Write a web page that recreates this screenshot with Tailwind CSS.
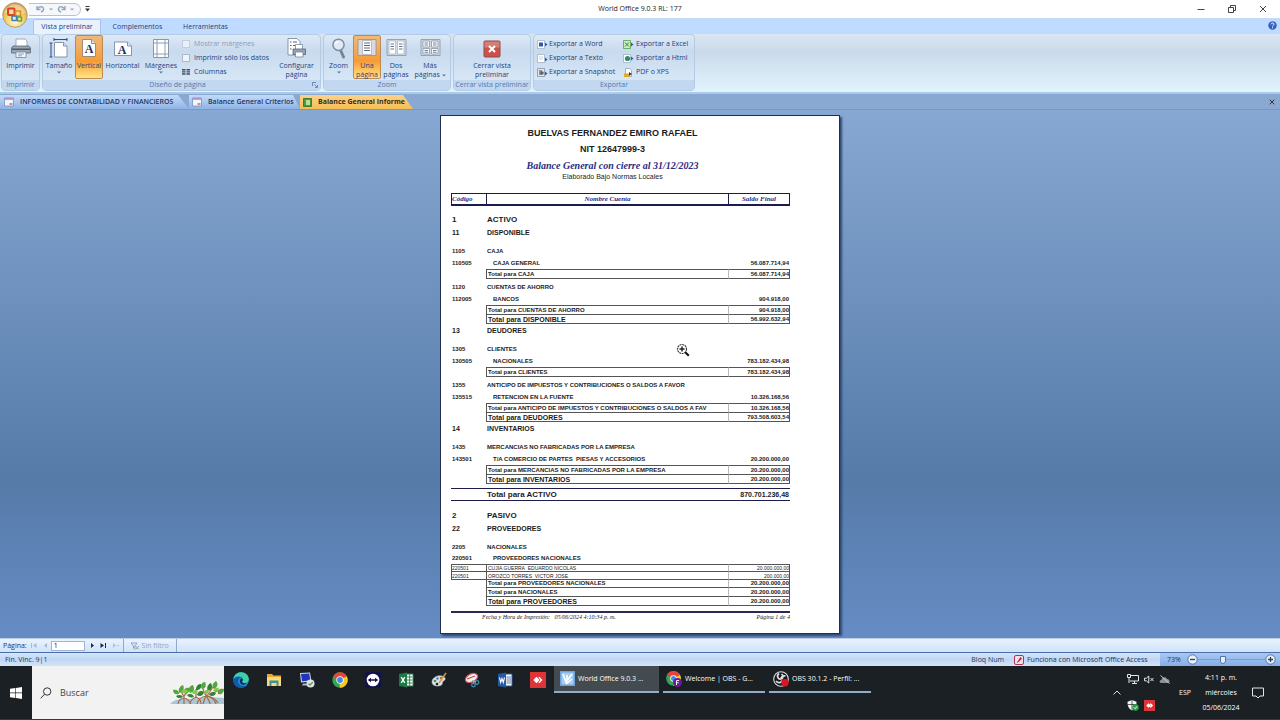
<!DOCTYPE html>
<html lang="es">
<head>
<meta charset="utf-8">
<meta name="viewport" content="width=device-width, initial-scale=1">
<title>World Office 9.0.3 RL: 177</title>
<script src="https://cdn.jsdelivr.net/npm/@tailwindcss/browser@4"></script>
</head>
<body class="flex h-screen flex-col overflow-hidden bg-white font-['Open_Sans','Noto_Sans',sans-serif] text-[7px] leading-[10px] text-[#1f3f7d]">

    <!-- Title bar -->
    <header class="relative flex h-[18px] shrink-0 items-center bg-white text-[#222]">
        <div class="ml-[29px] flex h-[13px] w-[52px] items-center justify-center gap-1 rounded-r-full border border-l-0 border-[#b9c3d0] bg-[#f5f7fa] text-[#98a6bb]">
            <button type="button" aria-label="Deshacer">
                <svg class="h-[8px] w-[9px]" viewBox="0 0 9 8" fill="none" stroke="currentColor" stroke-width="1.4"><path d="M1 1v3.5h3.5M1.300 4C3 1 7 1 7.500 3.500c.3 1.800-1 3-2.500 3.500"/></svg>
            </button>
            <svg class="h-[3px] w-[4px]" viewBox="0 0 4 3" fill="currentColor"><path d="M0 .5h4l-2 2z"/></svg>
            <button type="button" aria-label="Rehacer">
                <svg class="h-[8px] w-[9px]" viewBox="0 0 9 8" fill="none" stroke="currentColor" stroke-width="1.400"><path d="M8 1v3.500H4.500M7.700 4C6 1 2 1 1.500 3.500 1.200 5.300 2.500 6.500 4 7"/></svg>
            </button>
            <svg class="h-[3px] w-[4px]" viewBox="0 0 4 3" fill="currentColor"><path d="M0 .5h4l-2 2z"/></svg>
        </div>
        <button type="button" class="ml-1" aria-label="Personalizar">
            <svg class="h-[6px] w-[5px]" viewBox="0 0 5 6" fill="#333"><path d="M.5 0h4v1h-4zM0 2.500h5L2.500 5.500z"/></svg>
        </button>
        <h1 class="absolute left-1/2 -translate-x-1/2 whitespace-nowrap">World Office 9.0.3 RL: 177</h1>
        <div class="ml-auto flex items-center gap-[23px] pr-[13px]">
            <button type="button" aria-label="Minimizar"><svg class="h-[8px] w-[8px]" viewBox="0 0 8 8" stroke="#444" fill="none"><path d="M.5 4.500h7"/></svg></button>
            <button type="button" aria-label="Restaurar"><svg class="h-[8px] w-[8px]" viewBox="0 0 8 8" stroke="#444" fill="none"><path d="M.5 2.500h5v5h-5zM2.500 2V.5h5v5H6"/></svg></button>
            <button type="button" aria-label="Cerrar"><svg class="h-[8px] w-[8px]" viewBox="0 0 8 8" stroke="#444" fill="none"><path d="M1 1l6 6M7 1L1 7"/></svg></button>
        </div>

        <!-- Office button hangs over the ribbon tabs -->
        <button type="button" class="absolute top-[2px] left-[2px] z-10" aria-label="Botón de Office">
            <svg class="size-[26px]" viewBox="0 0 26 26">
                <defs>
                    <radialGradient id="orb" cx=".5" cy=".75" r=".75"><stop offset="0" stop-color="#fffbe0"/><stop offset=".5" stop-color="#f3ce62"/><stop offset="1" stop-color="#c99a4a"/></radialGradient>
                </defs>
                <circle cx="13" cy="13" r="12.300" fill="url(#orb)" stroke="#a98f66" stroke-width=".8"/>
                <path d="M2.500 11a10.700 10.700 0 0 1 21 0c-6 2-15 2-21 0z" fill="#fff" opacity=".35"/>
                <rect x="6" y="6.500" width="6.500" height="6.500" rx="1" fill="none" stroke="#d7442a" stroke-width="2"/>
                <rect x="13.500" y="9" width="5" height="5" rx=".6" fill="none" stroke="#e88a22" stroke-width="1.700"/>
                <rect x="10" y="14" width="4.500" height="4.500" rx=".6" fill="none" stroke="#3b78c8" stroke-width="1.500"/>
                <rect x="15.500" y="15" width="4" height="4" rx=".6" fill="none" stroke="#5aa63b" stroke-width="1.500"/>
            </svg>
        </button>
    </header>

    <!-- Ribbon tabs -->
    <nav class="flex h-4 shrink-0 items-end bg-[#bfdbff] pl-[33px]">
        <a href="#" class="flex h-[15px] w-[68px] items-center justify-center rounded-t-[2px] border border-b-0 border-[#a6c3ea] bg-[#e9f2fc]">Vista preliminar</a>
        <a href="#" class="flex h-[15px] w-[73px] items-center justify-center">Complementos</a>
        <a href="#" class="flex h-[15px] w-[63px] items-center justify-center">Herramientas</a>
        <button type="button" class="mr-[3px] mb-1 ml-auto" aria-label="Ayuda">
            <svg class="size-[9px]" viewBox="0 0 9 9"><circle cx="4.500" cy="4.500" r="4.200" fill="#2f62c0"/><path d="M3 3.300C3.200 1.500 6 1.600 6 3.200 6 4.300 4.500 4.300 4.500 5.500M4.500 6.300v1" stroke="#fff" fill="none"/></svg>
        </button>
    </nav>

    <!-- Ribbon -->
    <section class="flex h-[60px] shrink-0 gap-[2px] border-b-2 border-[#a9cbe6] bg-linear-to-b from-[#dbe6f3] via-[#cbdaeb] via-30% to-[#e0f4fc] px-px pb-px">
        <div class="flex w-[39px] flex-col rounded-sm border border-[#b3cbe5] bg-linear-to-b from-[#dde9f6] via-[#c8daee] via-30% to-[#dcebf8]">
            <button type="button" class="flex flex-1 flex-col items-center pt-[3px]">
                <svg class="h-[21px] w-[22px] shrink-0" viewBox="0 0 22 21"><path d="M6 1h9l2 2v7H6z" fill="#fff" stroke="#8c9bb0" stroke-width=".8"/><path d="M3 8h16l1.500 2v5h-19v-5z" fill="#9aa6b4" stroke="#5c6878" stroke-width=".8"/><path d="M2 10.500h18v1.500H2z" fill="#4e5865"/><path d="M6 14h10v5.500H6z" fill="#f5f8fc" stroke="#75849a" stroke-width=".8"/><path d="M8 16h6M8 17.800h4" stroke="#5d8ac0" stroke-width=".8"/></svg>
                <span class="pt-[2px]">Imprimir</span>
            </button>
            <p class="bg-[#c1d8f0] text-center text-[#5378ad]">Imprimir</p>
        </div>

        <div class="flex w-[279px] flex-col rounded-sm border border-[#b3cbe5] bg-linear-to-b from-[#dde9f6] via-[#c8daee] via-30% to-[#dcebf8]">
            <div class="flex flex-1">
                <button type="button" class="flex w-8 flex-col items-center pt-[3px]">
                    <svg class="h-[21px] w-[20px] shrink-0" viewBox="0 0 20 21"><path d="M5.500 4.500h9l3.500 3.500v11H5.500z" fill="#fff" stroke="#7b8ca6" stroke-width=".9"/><path d="M14.500 4.500V8H18" fill="#dbe5f2" stroke="#7b8ca6" stroke-width=".9"/><path d="M5 1.500h13M5 0v3M18 0v3M2 5v14M.5 5h3M.5 19h3" stroke="#2d4c86" fill="none"/></svg>
                    <span class="pt-[2px]">Tamaño</span>
                    <svg class="h-[3px] w-[4px]" viewBox="0 0 4 3" fill="#5776a8"><path d="M0 .5h4l-2 2z"/></svg>
                </button>
                <button type="button" class="flex h-[44px] w-7 flex-col items-center justify-start rounded-[2px] border border-[#b98b52] bg-linear-to-b from-[#f0b878] via-[#f59b35] via-60% to-[#ffe680] pt-[2px]">
                    <svg class="h-[21px] w-[16px] shrink-0" viewBox="0 0 16 21"><path d="M1.500 1.500h9l4 4v13h-13z" fill="#fff" stroke="#96846c" stroke-width=".9"/><path d="M10.500 1.500v4h4" fill="#e6e6e6" stroke="#96846c" stroke-width=".9"/><text x="8" y="15" text-anchor="middle" font-family="Liberation Serif" font-weight="bold" font-size="12" fill="#1c2f66">A</text></svg>
                    <span class="pt-[2px]">Vertical</span>
                </button>
                <button type="button" class="flex w-[39px] flex-col items-center pt-[3px]">
                    <svg class="h-[21px] w-[20px] shrink-0" viewBox="0 0 20 21"><path d="M1.500 4h13l4 4v9.500h-17z" fill="#fff" stroke="#7b8ca6" stroke-width=".9"/><path d="M14.500 4v4h4" fill="#dbe5f2" stroke="#7b8ca6" stroke-width=".9"/><text x="9" y="15.500" text-anchor="middle" font-family="Liberation Serif" font-weight="bold" font-size="12" fill="#1c2f66">A</text></svg>
                    <span class="pt-[2px]">Horizontal</span>
                </button>
                <button type="button" class="flex w-[38px] flex-col items-center pt-[3px]">
                    <svg class="h-[21px] w-[18px] shrink-0" viewBox="0 0 18 21"><path d="M1.500 1.500h15v18h-15z" fill="#fff" stroke="#7b8ca6" stroke-width=".9"/><path d="M5 1.500v18M13 1.500v18M1.500 5h15M1.500 16h15" stroke="#8593a8" stroke-width=".9"/></svg>
                    <span class="pt-[2px]">Márgenes</span>
                    <svg class="h-[3px] w-[4px]" viewBox="0 0 4 3" fill="#5776a8"><path d="M0 .5h4l-2 2z"/></svg>
                </button>
                <div class="flex flex-1 flex-col gap-1 pt-[4px] pl-[2px]">
                    <label class="flex items-center gap-[4px] text-[#8d9db5]"><input type="checkbox" disabled class="size-[8px] appearance-none border border-[#c3cfdd] bg-[#eaf0f7]">Mostrar márgenes</label>
                    <label class="flex items-center gap-[4px]"><input type="checkbox" class="size-[8px] appearance-none border border-[#aab8ca] bg-[#f1f5fa]">Imprimir sólo los datos</label>
                    <button type="button" class="flex items-center gap-[4px]"><svg class="h-[8px] w-[8px]" viewBox="0 0 8 8" fill="#3f4d63"><path d="M0 1h3.500v1.500H0zM4.500 1H8v1.500H4.500zM0 3.200h3.500v1.300H0zM4.500 3.200H8v1.300H4.500zM0 5.300h3.500v1.500H0zM4.500 5.300H8v1.500H4.500z"/></svg>Columnas</button>
                </div>
                <button type="button" class="flex w-[47px] flex-col items-center pt-[3px] leading-[9px]">
                    <svg class="h-[21px] w-[21px] shrink-0" viewBox="0 0 21 21"><path d="M2 .5h9l3 3V17H2z" fill="#fff" stroke="#7b8ca6" stroke-width=".9"/><path d="M4 4h1.500M4 7.500h1.500M4 11h1.500M7 4h4M7 7.500h4" stroke="#4f6079" stroke-width="1.200"/><path d="M9.500 6.500h7v5h-7z" fill="#fff" stroke="#7b8ca6" stroke-width=".8"/><path d="M7 11h12.500v5.500H7z" fill="#97a3b2" stroke="#566273" stroke-width=".8"/><path d="M9.500 14h7.500v5H9.500z" fill="#fff" stroke="#75849a" stroke-width=".8"/></svg>
                    <span class="pt-[2px]">Configurar<br>página</span>
                </button>
            </div>
            <div class="flex items-center bg-[#c1d8f0] text-[#5378ad]">
                <p class="flex-1 text-center">Diseño de página</p>
                <button type="button" class="mr-[2px]" aria-label="Opciones de página"><svg class="size-[6px]" viewBox="0 0 6 6" stroke="#5378ad" fill="none" stroke-width=".8"><path d="M.5 4V.5H4M2.500 2.500L5 5M5.500 3v2.500H3"/></svg></button>
            </div>
        </div>

        <div class="flex w-[128px] flex-col rounded-sm border border-[#b3cbe5] bg-linear-to-b from-[#dde9f6] via-[#c8daee] via-30% to-[#dcebf8]">
            <div class="flex flex-1">
                <button type="button" class="flex w-[29px] flex-col items-center pt-[3px]">
                    <svg class="h-[21px] w-[16px] shrink-0" viewBox="0 0 16 21"><path d="M9.500 12l3 7" stroke="#77869b" stroke-width="3" stroke-linecap="round"/><circle cx="7.500" cy="6.800" r="5.600" fill="#dfeaf6" stroke="#7f8da2" stroke-width="1.500"/><path d="M4.500 6a3 3 0 0 1 3-2.500" stroke="#fff" fill="none" stroke-width="1.200"/></svg>
                    <span class="pt-[2px]">Zoom</span>
                    <svg class="h-[3px] w-[4px]" viewBox="0 0 4 3" fill="#5776a8"><path d="M0 .5h4l-2 2z"/></svg>
                </button>
                <button type="button" class="flex h-[44px] w-7 flex-col items-center justify-start rounded-[2px] border border-[#b98b52] bg-linear-to-b from-[#f0b878] via-[#f59b35] via-60% to-[#ffe680] pt-[2px] leading-[9px]">
                    <svg class="h-[21px] w-[20px] shrink-0" viewBox="0 0 20 21"><path d="M1 1.500h18v16H1z" fill="#d9dbe0" stroke="#8f8f96" stroke-width=".8"/><path d="M5.500 2.500h9v14h-9z" fill="#fff" stroke="#9a9a9a" stroke-width=".6"/><path d="M7 5h6M7 7.500h6M7 10h6M7 12.500h6" stroke="#5e6a7c"/></svg>
                    <span class="pt-[2px]">Una<br>página</span>
                </button>
                <button type="button" class="flex w-[30px] flex-col items-center pt-[3px] leading-[9px]">
                    <svg class="h-[21px] w-[21px] shrink-0" viewBox="0 0 21 21"><path d="M1 1.500h19v16H1z" fill="#d3dbe6" stroke="#8794a8" stroke-width=".8"/><path d="M3 3h6.500v13H3zM11.500 3H18v13h-6.500z" fill="#fff" stroke="#98a4b5" stroke-width=".6"/><path d="M4.500 6h3.500M4.500 8.500h3.500M4.500 11h3.500M13 6h3.500M13 8.500h3.500M13 11h3.500" stroke="#66748a"/></svg>
                    <span class="pt-[2px]">Dos<br>páginas</span>
                </button>
                <button type="button" class="flex w-[38px] flex-col items-center pt-[3px] leading-[9px]">
                    <svg class="h-[21px] w-[21px] shrink-0" viewBox="0 0 21 21"><path d="M1 1.500h19v16H1z" fill="#d3dbe6" stroke="#8794a8" stroke-width=".8"/><path d="M3 3h6.500v6H3zM11.500 3H18v6h-6.500zM3 10.500h6.500V16H3zM11.500 10.500H18V16h-6.500z" fill="#fff" stroke="#7b889b" stroke-width=".7"/><path d="M4.500 5h3.500M4.500 7h3.500M13 5h3.500M13 7h3.500M4.500 12.500h3.500M4.500 14.300h3.500M13 12.500h3.500M13 14.300h3.500" stroke="#4f5d73" stroke-width=".8"/></svg>
                    <span class="pt-[2px]">Más<br>páginas <svg class="inline h-[3px] w-[4px]" viewBox="0 0 4 3" fill="#5776a8"><path d="M0 .5h4l-2 2z"/></svg></span>
                </button>
            </div>
            <p class="bg-[#c1d8f0] text-center text-[#5378ad]">Zoom</p>
        </div>

        <div class="flex w-[78px] flex-col rounded-sm border border-[#b3cbe5] bg-linear-to-b from-[#dde9f6] via-[#c8daee] via-30% to-[#dcebf8]">
            <button type="button" class="flex flex-1 flex-col items-center pt-[3px] leading-[9px]">
                <svg class="h-[21px] w-[18px] shrink-0" viewBox="0 0 18 21"><rect x="1" y="3" width="16" height="16" rx="1" fill="#c9534c" stroke="#8f4a4a"/><path d="M1.500 3.500h15v6h-15z" fill="#e39a90" opacity=".6"/><path d="M6 8l6 6M12 8l-6 6" stroke="#fff" stroke-width="2"/></svg>
                <span class="pt-[2px]">Cerrar vista<br>preliminar</span>
            </button>
            <p class="bg-[#c1d8f0] text-center whitespace-nowrap text-[#5378ad]">Cerrar vista preliminar</p>
        </div>

        <div class="flex w-[162px] flex-col rounded-sm border border-[#b3cbe5] bg-linear-to-b from-[#dde9f6] via-[#c8daee] via-30% to-[#dcebf8]">
            <div class="flex flex-1 gap-1 pt-[4px] pl-[3px] whitespace-nowrap">
                <div class="flex w-[82px] flex-col gap-1">
                    <button type="button" class="flex items-center gap-px"><svg class="h-[9px] w-[11px]" viewBox="0 0 11 9"><path d="M.5.500h7v8h-7z" fill="#fff" stroke="#9aa9c0" stroke-width=".7"/><path d="M2 2.500h4v4H2z" fill="#2e57a8"/><path d="M8 2.500L10.500 4.500 8 6.500z" fill="#2c59b4"/></svg>Exportar a Word</button>
                    <button type="button" class="flex items-center gap-px"><svg class="h-[9px] w-[11px]" viewBox="0 0 11 9"><path d="M.5.500h7v8h-7z" fill="#fff" stroke="#9aa9c0" stroke-width=".7"/><path d="M2 3h4M2 5h4" stroke="#b7bfcc" stroke-width=".7"/><path d="M8 3.500L10.500 5.500 8 7.500z" fill="#2c59b4"/></svg>Exportar a Texto</button>
                    <button type="button" class="flex items-center gap-px"><svg class="h-[9px] w-[11px]" viewBox="0 0 11 9"><path d="M.5.500h7v8h-7z" fill="#e3e6ea" stroke="#7d8899" stroke-width=".7"/><path d="M2 2h3v5H2z" fill="#8a93a0"/><circle cx="5" cy="5" r="1.800" fill="#5c6673"/><path d="M8 3.500L10.500 5.500 8 7.500z" fill="#2c59b4"/></svg>Exportar a Snapshot</button>
                </div>
                <div class="flex flex-col gap-1">
                    <button type="button" class="flex items-center gap-[2px]"><svg class="h-[9px] w-[11px]" viewBox="0 0 11 9"><path d="M.5.500h7v8h-7z" fill="#cfe8c5" stroke="#4ea346" stroke-width=".8"/><path d="M2 2.500l4 4M6 2.500l-4 4" stroke="#2e8b35"/><path d="M8 2.500L10.500 4.500 8 6.500z" fill="#2c59b4"/></svg>Exportar a Excel</button>
                    <button type="button" class="flex items-center gap-[2px]"><svg class="h-[9px] w-[11px]" viewBox="0 0 11 9"><path d="M.5.500h7v8h-7z" fill="#fff" stroke="#9aa9c0" stroke-width=".7"/><circle cx="4.500" cy="4.500" r="2.600" fill="#2f8f6a"/><path d="M8 2.500L10.500 4.500 8 6.500z" fill="#2c59b4"/></svg>Exportar a Html</button>
                    <button type="button" class="flex items-center gap-[2px]"><svg class="h-[9px] w-[11px]" viewBox="0 0 11 9"><path d="M2.500.500h4l2 2v6h-6z" fill="#fff" stroke="#8593a8" stroke-width=".7"/><path d="M1 5.500h5V9H1z" fill="#e0a92c"/><path d="M6 4l3 2-3 2z" fill="#2d3e5c"/></svg>PDF o XPS</button>
                </div>
            </div>
            <p class="bg-[#c1d8f0] text-center text-[#5378ad]">Exportar</p>
        </div>
    </section>

    <!-- Open documents -->
    <nav class="flex h-4 shrink-0 items-stretch border-b border-[#7698c6] bg-[#89a9d3] pt-px font-semibold text-[#1d3461]">
        <a href="#" class="flex w-[189px] items-center gap-[6px] bg-linear-to-b from-[#c3dafa] to-[#8fb4e6] pl-1 whitespace-nowrap [clip-path:polygon(0_0,178px_0,100%_100%,0_100%)]">
            <svg class="h-[10px] w-[10px]" viewBox="0 0 10 10"><path d="M.5 1h9v8h-9z" fill="#f2f4fb" stroke="#7286b0" stroke-width=".7"/><path d="M.5 1h9v1.800h-9z" fill="#a894c4"/><path d="M5.500 6h3v2h-3z" fill="#c58fa0"/></svg>
            INFORMES DE CONTABILIDAD Y FINANCIEROS
        </a>
        <a href="#" class="flex w-[111px] items-center gap-[6px] bg-linear-to-b from-[#c3dafa] to-[#8fb4e6] pl-[3px] whitespace-nowrap [clip-path:polygon(0_0,104px_0,100%_100%,0_100%)]">
            <svg class="h-[10px] w-[10px]" viewBox="0 0 10 10"><path d="M.5 1h9v8h-9z" fill="#f2f4fb" stroke="#7286b0" stroke-width=".7"/><path d="M.5 1h9v1.800h-9z" fill="#a894c4"/><path d="M5.500 6h3v2h-3z" fill="#c58fa0"/></svg>
            Balance General Criterios
        </a>
        <a href="#" class="flex w-[113px] items-center gap-[6px] bg-linear-to-b from-[#fbd28c] to-[#f6bf52] pl-[3px] font-bold whitespace-nowrap text-[#402c10] [clip-path:polygon(0_0,103px_0,100%_100%,0_100%)]">
            <svg class="h-[9px] w-[9px]" viewBox="0 0 9 9"><path d="M.5.500h8v8h-8z" fill="#4d9a3c" stroke="#2e6b28" stroke-width=".8"/><path d="M3 2h4v5H3z" fill="#b9dd9f"/></svg>
            Balance General Informe
        </a>
        <button type="button" class="mr-[5px] ml-auto" aria-label="Cerrar documento"><svg class="size-[6px]" viewBox="0 0 6 6" stroke="#333"><path d="M.7.700l4.600 4.600M5.300.700L.7 5.300"/></svg></button>
    </nav>

    <!-- Print preview -->
    <main class="relative flex flex-1 items-start justify-center overflow-hidden bg-linear-to-b from-[#87a8d2] via-[#567ba9] via-70% to-[#668cc4] pt-[5px]">
        <article class="flex h-[519px] w-[400px] flex-col border border-[#1f2f4d] bg-white pr-[49px] pl-[10px] font-['Liberation_Sans',sans-serif] text-[#1b1b1b] shadow-[2px_2px_2px_#2f4a74]">
            <header class="flex flex-col items-center pt-[10px] pr-[16px] font-bold">
                <h2 class="text-[9px] leading-[15px]">BUELVAS FERNANDEZ EMIRO RAFAEL</h2>
                <p class="text-[9px] leading-[16px]">NIT 12647999-3</p>
                <p class="font-['Liberation_Serif',serif] text-[10px] leading-[17px] text-[#2b2b80] italic">Balance General con cierre al 31/12/2023</p>
                <p class="text-[7px] leading-[6px] font-normal">Elaborado Bajo Normas Locales</p>
            </header>

            <table class="mt-[13px] w-full table-fixed border-separate border-spacing-0 text-[6px] leading-[7px] font-bold whitespace-nowrap [&_td]:p-0 [&_th]:p-0">
                <colgroup>
                    <col class="w-[35px]">
                    <col>
                    <col class="w-[62px]">
                </colgroup>
                <thead class="font-['Liberation_Serif',serif] text-[7px] text-[#2b2b80] italic">
                    <tr class="h-[13px]">
                        <th class="border-t border-b-2 border-l border-[#1c1c4a] text-left">Código</th>
                        <th class="border-t border-b-2 border-l border-[#1c1c4a]">Nombre Cuenta</th>
                        <th class="border-x border-t border-b-2 border-[#1c1c4a]">Saldo Final</th>
                    </tr>
                </thead>
                <tbody>
                    <tr class="h-[7px]"><td colspan="3"></td></tr>
                    <tr class="h-[13px] text-[8px]"><td class="pl-px!">1</td><td class="pl-px!">ACTIVO</td><td></td></tr>
                    <tr class="h-[13px] text-[7px]"><td class="pl-px!">11</td><td class="pl-px!">DISPONIBLE</td><td></td></tr>
                    <tr class="h-[18px]"><td class="pt-[6px]! pl-px!">1105</td><td class="pt-[6px]! pl-px!">CAJA</td><td></td></tr>
                    <tr class="h-[12px]"><td class="pl-px!">110505</td><td class="pl-[7px]!">CAJA GENERAL</td><td class="pr-px! text-right">56.087.714,94</td></tr>
                    <tr class="h-[10px]"><td></td><td class="border-y border-l border-[#555] pl-px!">Total para CAJA</td><td class="border border-[#555] border-l-[#bbb] text-right">56.087.714,94</td></tr>
                    <tr class="h-[14px]"><td class="pt-[2px]! pl-px!">1120</td><td class="pt-[2px]! pl-px!">CUENTAS DE AHORRO</td><td></td></tr>
                    <tr class="h-[12px]"><td class="pl-px!">112005</td><td class="pl-[7px]!">BANCOS</td><td class="pr-px! text-right">904.918,00</td></tr>
                    <tr class="h-[10px]"><td></td><td class="border-y border-l border-[#555] pl-px!">Total para CUENTAS DE AHORRO</td><td class="border border-[#555] border-l-[#bbb] text-right">904.918,00</td></tr>
                    <tr class="h-[9px]"><td></td><td class="border-b border-l border-[#555] pl-px! text-[7px]">Total para DISPONIBLE</td><td class="border border-t-0 border-[#555] border-l-[#bbb] text-right">56.992.632,94</td></tr>
                    <tr class="h-[13px] text-[7px]"><td class="pl-px!">13</td><td class="pl-px!">DEUDORES</td><td></td></tr>
                    <tr class="h-[18px]"><td class="pt-[6px]! pl-px!">1305</td><td class="pt-[6px]! pl-px!">CLIENTES</td><td></td></tr>
                    <tr class="h-[12px]"><td class="pl-px!">130505</td><td class="pl-[7px]!">NACIONALES</td><td class="pr-px! text-right">783.182.434,98</td></tr>
                    <tr class="h-[10px]"><td></td><td class="border-y border-l border-[#555] pl-px!">Total para CLIENTES</td><td class="border border-[#555] border-l-[#bbb] text-right">783.182.434,98</td></tr>
                    <tr class="h-[14px]"><td class="pt-[2px]! pl-px!">1355</td><td class="pt-[2px]! pl-px!">ANTICIPO DE IMPUESTOS Y CONTRIBUCIONES O SALDOS A FAVOR</td><td></td></tr>
                    <tr class="h-[12px]"><td class="pl-px!">135515</td><td class="pl-[7px]!">RETENCION EN LA FUENTE</td><td class="pr-px! text-right">10.326.168,56</td></tr>
                    <tr class="h-[10px]"><td></td><td class="border-y border-l border-[#555] pl-px!">Total para ANTICIPO DE IMPUESTOS Y CONTRIBUCIONES O SALDOS A FAV</td><td class="border border-[#555] border-l-[#bbb] text-right">10.326.168,56</td></tr>
                    <tr class="h-[9px]"><td></td><td class="border-b border-l border-[#555] pl-px! text-[7px]">Total para DEUDORES</td><td class="border border-t-0 border-[#555] border-l-[#bbb] text-right">793.508.603,54</td></tr>
                    <tr class="h-[13px] text-[7px]"><td class="pl-px!">14</td><td class="pl-px!">INVENTARIOS</td><td></td></tr>
                    <tr class="h-[18px]"><td class="pt-[6px]! pl-px!">1435</td><td class="pt-[6px]! pl-px!">MERCANCIAS NO FABRICADAS POR LA EMPRESA</td><td></td></tr>
                    <tr class="h-[12px]"><td class="pl-px!">143501</td><td class="pl-[7px]!">T/A COMERCIO DE PARTES&nbsp; PIESAS Y ACCESORIOS</td><td class="pr-px! text-right">20.200.000,00</td></tr>
                    <tr class="h-[10px]"><td></td><td class="border-y border-l border-[#555] pl-px!">Total para MERCANCIAS NO FABRICADAS POR LA EMPRESA</td><td class="border border-[#555] border-l-[#bbb] text-right">20.200.000,00</td></tr>
                    <tr class="h-[9px]"><td></td><td class="border-b border-l border-[#555] pl-px! text-[7px]">Total para INVENTARIOS</td><td class="border border-t-0 border-[#555] border-l-[#bbb] text-right">20.200.000,00</td></tr>
                    <tr class="h-[4px]"><td colspan="3"></td></tr>
                    <tr class="h-[13px] text-[8px]"><td class="border-y border-[#1c1c4a]"></td><td class="border-y border-[#1c1c4a] pl-px!">Total para ACTIVO</td><td class="border-y border-[#1c1c4a] pr-px! text-right text-[7px]">870.701.236,48</td></tr>
                    <tr class="h-[8px]"><td colspan="3"></td></tr>
                    <tr class="h-[13px] text-[8px]"><td class="pl-px!">2</td><td class="pl-px!">PASIVO</td><td></td></tr>
                    <tr class="h-[13px] text-[7px]"><td class="pl-px!">22</td><td class="pl-px!">PROVEEDORES</td><td></td></tr>
                    <tr class="h-[18px]"><td class="pt-[6px]! pl-px!">2205</td><td class="pt-[6px]! pl-px!">NACIONALES</td><td></td></tr>
                    <tr class="h-[11px]"><td class="pl-px!">220501</td><td class="pl-[7px]!">PROVEEDORES NACIONALES</td><td></td></tr>
                    <tr class="h-[8px] text-[5px] leading-[6px] font-normal"><td class="border-y border-l border-[#555]">220501</td><td class="border-y border-l border-[#555] pl-px!">CUJIA GUERRA&nbsp; EDUARDO NICOLAS</td><td class="border border-[#555] border-l-[#bbb] text-right">20.000.000,00</td></tr>
                    <tr class="h-[8px] text-[5px] leading-[6px] font-normal"><td class="border-b border-l border-[#555]">220501</td><td class="border-b border-l border-[#555] pl-px!">OROZCO TORRES&nbsp; VICTOR JOSE</td><td class="border border-t-0 border-[#555] border-l-[#bbb] text-right">200.000,00</td></tr>
                    <tr class="h-[8px]"><td></td><td class="border-b border-l border-[#555] pl-px!">Total para PROVEEDORES NACIONALES</td><td class="border border-t-0 border-[#555] border-l-[#bbb] text-right">20.200.000,00</td></tr>
                    <tr class="h-[9px]"><td></td><td class="border-b border-l border-[#555] pl-px!">Total para NACIONALES</td><td class="border border-t-0 border-[#555] border-l-[#bbb] text-right">20.200.000,00</td></tr>
                    <tr class="h-[9px]"><td></td><td class="border-b border-l border-[#555] pl-px! text-[7px]">Total para PROVEEDORES</td><td class="border border-t-0 border-[#555] border-l-[#bbb] text-right">20.200.000,00</td></tr>
                </tbody>
            </table>

            <footer class="mt-[5px] flex justify-between border-t-2 border-[#2a2a55] pl-[31px] font-['Liberation_Serif',serif] text-[6px] leading-[8px] italic">
                <p>Fecha y Hora de Impresión: &nbsp; 05/06/2024 4:10:34 p. m.</p>
                <p>Página 1 de 4</p>
            </footer>
        </article>

        <!-- Zoom cursor -->
        <svg class="absolute top-[233px] left-[676px] size-[14px]" viewBox="0 0 14 14"><circle cx="6" cy="6" r="4.500" fill="#fff" stroke="#444" stroke-width="1.200" stroke-dasharray="2 .6"/><path d="M3.500 6h5M6 3.500v5" stroke="#222" stroke-width="1.500"/><path d="M9.300 9.300l3.500 3.500" stroke="#111" stroke-width="2"/></svg>
    </main>

    <!-- Page navigation -->
    <nav class="flex h-[14px] shrink-0 items-center border-t border-[#b8cce8] bg-linear-to-b from-[#e9f3fe] to-[#cfe3fa] text-[#1d3461]">
        <label for="page" class="pl-[3px]">Página:</label>
        <div class="flex items-center gap-[7px] px-1 text-[#a9b9d0]">
            <button type="button" aria-label="Primera página"><svg class="h-[5px] w-[6px]" viewBox="0 0 6 5" fill="currentColor"><path d="M0 0h1v5H0zM5.500 0v5L2 2.500z"/></svg></button>
            <button type="button" aria-label="Página anterior"><svg class="h-[5px] w-[3px]" viewBox="0 0 3 5" fill="currentColor"><path d="M3 0v5L0 2.500z"/></svg></button>
        </div>
        <input id="page" type="text" value="1" class="h-[10px] w-[34px] border border-[#9db6d8] bg-white px-[2px] text-[7px] leading-[8px] text-[#111]">
        <div class="flex w-[38px] items-center justify-between pr-1 pl-[6px] text-[#1b2a49]">
            <button type="button" aria-label="Página siguiente"><svg class="h-[5px] w-[3px]" viewBox="0 0 3 5" fill="currentColor"><path d="M0 0v5l3-2.500z"/></svg></button>
            <button type="button" aria-label="Última página"><svg class="h-[5px] w-[6px]" viewBox="0 0 6 5" fill="currentColor"><path d="M5 0h1v5H5zM.5 0v5L4 2.500z"/></svg></button>
            <svg class="h-[5px] w-[6px]" viewBox="0 0 6 5" fill="#b3c2d8"><path d="M0 0v5l3-2.500zM4 2h2v1H4z"/></svg>
        </div>
        <button type="button" disabled class="flex h-full w-[54px] items-center justify-center gap-[3px] border-x border-[#8fa9cc] text-[#93a3ba]">
            <svg class="h-[8px] w-[8px]" viewBox="0 0 8 8" stroke="currentColor" fill="none"><path d="M0 1h6L3.800 4v3L2.500 6V4zM4.500 4L8 7.500M8 4L4.500 7.500"/></svg>
            Sin filtro
        </button>
    </nav>

    <!-- Status bar -->
    <footer class="flex h-[14px] shrink-0 items-center border-t border-[#4a6ea9] bg-linear-to-b from-[#d7e6fa] via-[#c0d6f4] to-[#d5e5f8] text-[#1d3461]">
        <span class="flex-1 pl-[5px]">Fin. Vinc. 9|1</span>
        <span class="pr-[10px]">Bloq Num</span>
        <svg class="mr-[3px] h-[10px] w-[10px]" viewBox="0 0 10 10"><rect x=".5" y=".5" width="9" height="9" rx="1.500" fill="#f4dfe4" stroke="#a8385a"/><path d="M2.500 8L6.500 2 8 3.500 4.500 7z" fill="#a8284a"/></svg>
        <span class="w-[133px]">Funciona con Microsoft Office Access</span>
        <div class="flex h-full w-[120px] items-center bg-linear-to-b from-[#a9c8f3] to-[#85aee6] pl-[7px]">
            <span class="w-[20px]">73%</span>
            <button type="button" aria-label="Alejar"><svg class="size-[11px]" viewBox="0 0 11 11"><circle cx="5.500" cy="5.500" r="4.700" fill="#e6effa" stroke="#5673a5"/><path d="M3 5.500h5" stroke="#2b3f68" stroke-width="1.300"/></svg></button>
            <input type="range" min="0" max="100" value="36" aria-label="Zoom" class="h-[8px] w-[67px] appearance-none bg-[linear-gradient(#7f9fd0,#7f9fd0)] bg-[length:100%_1px] bg-center bg-no-repeat [&::-webkit-slider-thumb]:h-[8px] [&::-webkit-slider-thumb]:w-[6px] [&::-webkit-slider-thumb]:appearance-none [&::-webkit-slider-thumb]:rounded-b-[3px] [&::-webkit-slider-thumb]:border [&::-webkit-slider-thumb]:border-[#5673a5] [&::-webkit-slider-thumb]:bg-[#e6effa]">
            <button type="button" aria-label="Acercar"><svg class="size-[11px]" viewBox="0 0 11 11"><circle cx="5.500" cy="5.500" r="4.700" fill="#e6effa" stroke="#5673a5"/><path d="M3 5.500h5M5.500 3v5" stroke="#2b3f68" stroke-width="1.300"/></svg></button>
        </div>
    </footer>

    <!-- Windows taskbar -->
    <div class="flex h-[54px] shrink-0 border-b border-[#1d4a22] bg-[#1a2024] text-white">
        <button type="button" class="flex w-8 items-center justify-center" aria-label="Inicio">
            <svg class="size-[12px]" viewBox="0 0 12 12" fill="#fff"><path d="M0 1.700L5.400 1v4.600H0zM6 .9L12 0v5.600H6zM0 6.200h5.400v4.700L0 10.200zM6 6.200h6V12l-6-.9z"/></svg>
        </button>
        <label class="flex w-[192px] items-center gap-2 bg-[#f2f2f2] pl-2">
            <svg class="size-[12px] shrink-0" viewBox="0 0 12 12" fill="none" stroke="#333"><circle cx="7.200" cy="4.500" r="3.700"/><path d="M4.500 7.300L.7 11.300"/></svg>
            <input type="search" placeholder="Buscar" aria-label="Buscar" class="w-full min-w-0 flex-1 bg-transparent text-[9px] leading-3 text-[#333] outline-none placeholder:text-[#444]">
            <svg class="h-[24px] w-[54px] shrink-0" viewBox="0 0 54 24">
                <path d="M0 23c4-5 12-6 20-5 12-2 24-2 34-1v6z" fill="#a9c6d8"/>
                <path d="M8 23c0-4 4-6 6-6s5 3 7 6M14 23v-8M20 23c0-4 4-6 6-7 3 1 5 3 5 7M27 23c1-5 4-7 9-8 5 1 9 4 10 8M33 23c1-3 2-6 3-9 1 3 4 6 4 9M48 22c-2-4-6-6-10-7M14 16l-3-6M14 15l5-6M26 17V8M36 15l-4-9M37 15l6-9M43 12l6-3" fill="none" stroke="#a86b4a" stroke-width="1.200"/>
                <g fill="#55a63c"><path d="M3 9c4-1 6 1 6 4-4 1-6-1-6-4zM9 12c-1-4 1-7 4-8 2 4 0 7-4 8zM14 12c-1-4 2-6 6-5 0 4-3 6-6 5zM20 12c-2-4-1-7 3-8 2 4 1 7-3 8zM32 8c-2-4 0-7 3-7 2 4 0 7-3 7zM44 8c-3-3-1-6 2-8 3 3 1 7-2 8zM48 13c-1-4 2-6 6-5 0 4-3 6-6 5z"/></g>
                <g fill="#2f8237"><path d="M6 15c3-2 6-1 7 1-3 2-6 1-7-1zM17 14c3-2 6-1 7 2-3 1-6 0-7-2zM26 9c0-4 2-6 5-6 1 4-1 6-5 6zM27 14c1-4 4-5 7-3-1 4-4 5-7 3zM38 10c-2-3 0-7 3-8 2 4 1 7-3 8zM39 14c1-3 4-4 7-2-1 3-4 4-7 2z"/></g>
                <g fill="#8cc44c"><path d="M11 11c2-3 5-3 7-1-2 3-5 3-7 1zM22 12c1-3 4-4 6-2-1 3-4 4-6 2zM34 13c0-3 2-5 5-4 0 3-2 5-5 4zM43 10c1-3 3-4 6-3-1 3-3 4-6 3z"/></g>
            </svg>
        </label>

        <div class="flex h-[27px] items-center gap-[17px] pr-2 pl-[9px]">
            <button type="button" aria-label="Edge"><svg class="size-4" viewBox="0 0 16 16"><circle cx="8" cy="8" r="7.800" fill="#1e88d8"/><path d="M.4 7C1 2.500 4.500.2 8 .2c4.500 0 7.800 3.200 7.800 6.800 0 2.500-1.800 4-4.300 4-1.500 0-2.500-.6-2.500-1.200S9.900 9 9.900 7.500C9.900 5.500 7.800 4.300 5.800 4.300 3 4.300 1 5.500.4 7z" fill="#41d0a0"/><path d="M5 9.500C5 7 6.500 5.600 8 5.200 3 4.200.5 7 .2 8.500.5 13 4 15.800 8 15.800c2 0 4-.8 5-1.800C8.500 15 5 12.500 5 9.500z" fill="#1259a8"/><path d="M9 9.800c0 1.200 2 2 4.500 1.200-.8 1.500-3.500 2.300-5.300 1-1.600-1.200-1.700-3.700-.2-5.500 2.500 0 2 2 1 3.300z" fill="#0f2c4a"/></svg></button>
            <button type="button" aria-label="Explorador"><svg class="size-4" viewBox="0 0 16 16"><path d="M1 2h5l1.500 1.500H15V13H1z" fill="#e5a93a"/><path d="M1 5h14v9H1z" fill="#fbd878"/><path d="M3.500 8.500h9V14h-2v-3h-5v3h-2z" fill="#3f8f9c"/></svg></button>
            <button type="button" aria-label="Escritorio remoto"><svg class="size-4" viewBox="0 0 16 16"><path d="M1 1l10-.5 1.500 9L2 10.500z" fill="#cfd8e8"/><path d="M2 2l8.300-.5 1 7-8.300.7z" fill="#1f35c0"/><path d="M4 11.500h5l1 2H3z" fill="#aeb9c9"/><circle cx="11.500" cy="11.500" r="4" fill="#dce3ea"/><path d="M9.500 11.500l1.500 1.700 2.800-3.200" stroke="#6d8c58" fill="none" stroke-width="1.200"/></svg></button>
            <button type="button" aria-label="Chrome"><svg class="size-4" viewBox="0 0 16 16"><circle cx="8" cy="8" r="7.700" fill="#35a552"/><path d="M8 8L1.300 4.200A7.700 7.700 0 0 1 14.700 4.200z" fill="#e6443a"/><path d="M8 8l6.700-3.800A7.700 7.700 0 0 1 7.700 15.700z" fill="#fbc918"/><circle cx="8" cy="8" r="3.700" fill="#fff"/><circle cx="8" cy="8" r="2.900" fill="#4488ee"/></svg></button>
            <button type="button" aria-label="TeamViewer"><svg class="size-4" viewBox="0 0 16 16"><rect width="16" height="16" rx="2" fill="#12124c"/><circle cx="8" cy="8" r="6.300" fill="#fff"/><path d="M2.800 8l3.200-2.300v1.500h4V5.700L13.200 8 10 10.300V8.800H6v1.500z" fill="#12124c"/></svg></button>
            <button type="button" aria-label="Excel"><svg class="size-4" viewBox="0 0 16 16"><path d="M8 2h7v12H8z" fill="#fff" stroke="#2d8450"/><path d="M9 5h5M9 8h5M9 11h5M11.700 2v12" stroke="#2d8450"/><path d="M1 2l8-1.500v15L1 14z" fill="#1e7a45"/><path d="M3.200 5.200l3.600 5.600M6.800 5.200l-3.600 5.600" stroke="#fff" stroke-width="1.300"/></svg></button>
            <button type="button" aria-label="Paint"><svg class="size-4" viewBox="0 0 16 16"><path d="M1 9c1-4 6-6 10-5 4 1 4 4 1.500 5-1.500.7-.5 2-1.500 3.500C9 15 0 15 1 9z" fill="#dbe3e6" stroke="#9aa7ac" stroke-width=".6"/><circle cx="4" cy="9" r="1.300" fill="#3d9b48"/><circle cx="6.500" cy="6.500" r="1.200" fill="#3a7cd0"/><circle cx="10" cy="6" r="1.200" fill="#d8572e"/><circle cx="6" cy="12" r="1.300" fill="#222"/><path d="M15 1L8 11" stroke="#d09a45" stroke-width="1.500"/></svg></button>
            <button type="button" aria-label="Recortes"><svg class="size-4" viewBox="0 0 16 16"><ellipse cx="7.500" cy="6" rx="6.500" ry="4" transform="rotate(-25 7.500 6)" fill="#eee" stroke="#d2555a" stroke-width="1.200"/><path d="M3 7l8-3" stroke="#c7474f" stroke-width="1.200"/><circle cx="9.500" cy="13" r="1.800" fill="none" stroke="#3f8ba8" stroke-width="1.300"/><circle cx="13" cy="10.500" r="1.800" fill="none" stroke="#3f8ba8" stroke-width="1.300"/><path d="M8 8.500l4 1.500M10 8l-.5 3.500" stroke="#9db4bf"/></svg></button>
            <button type="button" aria-label="Word"><svg class="size-4" viewBox="0 0 16 16"><path d="M8 2h7v12H8z" fill="#fff" stroke="#2b5797"/><path d="M9.500 5h4.500M9.500 7h4.500M9.500 9h4.500M9.500 11h4.500" stroke="#2b5797" stroke-width=".8"/><path d="M1 2l8-1.500v15L1 14z" fill="#2459a6"/><path d="M2.500 5.500l1.200 5L5 6.500l1.300 4 1.200-5" stroke="#fff" fill="none" stroke-width="1.100"/></svg></button>
            <button type="button" aria-label="AnyDesk"><svg class="size-4" viewBox="0 0 16 16"><path d="M0 0h16v16H0z" fill="#dd3438"/><path d="M6.500 4.800L9.700 8l-3.200 3.200L3.300 8z" fill="#fff"/><path d="M9.300 4.800L12.500 8l-3.200 3.200-.9-.9L10.700 8 8.400 5.700z" fill="#fff"/></svg></button>
        </div>

        <div class="flex h-[27px] gap-[4px]">
            <button type="button" class="flex w-[105px] items-center gap-[3px] border-b-2 border-[#94adc6] bg-[#444b50] pl-[6px] whitespace-nowrap">
                <svg class="size-[15px]" viewBox="0 0 15 15"><path d="M0 0h15v15H0z" fill="#6ba3dc"/><path d="M1.500 1.500h12v12h-12z" fill="#a9cdf0"/><path d="M3 3l3 8 6-8M6 13l6-5M7 4v5" stroke="#fff" stroke-width="1.600" fill="none"/></svg>
                World Office 9.0.3 ...
            </button>
            <button type="button" class="flex w-[102px] items-center gap-[3px] border-b-2 border-[#94adc6] pl-[3px] whitespace-nowrap">
                <svg class="size-4" viewBox="0 0 16 16"><circle cx="7.500" cy="7.500" r="7.300" fill="#35a552"/><path d="M7.500 7.500L1 4a7.300 7.300 0 0 1 13 0z" fill="#e6443a"/><path d="M7.500 7.500L14 4a7.300 7.300 0 0 1-6.500 10.800z" fill="#fbc918"/><circle cx="7.500" cy="7.500" r="3.300" fill="#fff"/><circle cx="7.500" cy="7.500" r="2.500" fill="#4488ee"/><circle cx="11.500" cy="11.500" r="4.500" fill="#6a1b9a"/><path d="M10.500 14V9.500h2.700M10.500 11.700h2.200" stroke="#fff" fill="none" stroke-width=".9"/></svg>
                Welcome | OBS - G...
            </button>
            <button type="button" class="flex w-[102px] items-center gap-[3px] border-b-2 border-[#94adc6] pl-[4px] whitespace-nowrap">
                <svg class="size-4" viewBox="0 0 16 16"><circle cx="8" cy="8" r="7.300" fill="#17181c" stroke="#ddd" stroke-width="1.100"/><path d="M6 2.500C3 5 5 8.500 8 8c2.500-.5 2.500-4 .5-5M3 10c2 2.500 5.500 2 6-.5M12.500 5c-2.500-.5-4.500 1-4.500 3" fill="none" stroke="#ddd" stroke-width="1.700"/><circle cx="12" cy="11.800" r="3.700" fill="#e01420"/></svg>
                OBS 30.1.2 - Perfil: ...
            </button>
        </div>

        <!-- Notification area -->
        <div class="ml-auto flex items-center pr-4">
            <button type="button" class="mr-[6px]" aria-label="Mostrar iconos ocultos"><svg class="h-[5px] w-[8px]" viewBox="0 0 8 5" fill="none" stroke="#ddd"><path d="M.5 4.500L4 1l3.500 3.500"/></svg></button>
            <div class="mr-2 grid w-[44px] grid-cols-[12px_10px_12px] items-center gap-x-[5px] gap-y-[16px]">
                <svg class="h-[10px] w-[12px]" viewBox="0 0 12 10" fill="none" stroke="#e5e5e5"><path d="M3 1.500h8.500v5.500H3M5 9.500h5M7.500 7v2.500"/><path d="M.5.500h3v3h-3zM2 4v5" /></svg>
                <svg class="h-[9px] w-[10px]" viewBox="0 0 10 9" fill="none" stroke="#e5e5e5"><path d="M.5 3.200h1.800L4.800 1v7L2.300 5.800H.5zM6.500 3l3 3M9.500 3l-3 3"/></svg>
                <svg class="h-[9px] w-[12px]" viewBox="0 0 12 9"><path d="M2.500 8C0 8 0 5 2.500 4.700 3 2 7 1.500 8 4c3-.3 3.500 4 1 4z" fill="#8a9095"/><path d="M1.500.500l9 8" stroke="#c8cccf"/></svg>
                <svg class="h-[11px] w-[12px]" viewBox="0 0 12 11"><path d="M5 0l4.500 1.700c0 4-1 7-4.500 8.800C1.500 8.700.5 5.700.5 1.700z" fill="#f4f4f4"/><path d="M5 0v10.500M.6 4.500h8.600" stroke="#1a2024" stroke-width=".7"/><circle cx="8.500" cy="7.500" r="3.200" fill="#27a548"/><path d="M7 7.500l1.200 1.200L10 6.500" stroke="#fff" fill="none"/></svg>
                <svg class="size-[11px]" viewBox="0 0 11 11"><path d="M0 0h11v11H0z" fill="#dd3438"/><path d="M4.500 3.200l2.300 2.300-2.300 2.300-2.300-2.300zM6.800 3.200l2.300 2.300-2.300 2.300-1-1 1.300-1.300-1.300-1.300z" fill="#fff"/></svg>
            </div>
            <span class="w-[18px]">ESP</span>
            <div class="mr-[7px] w-[48px] text-center leading-[15px]">
                <p>4:11 p. m.</p>
                <p>miércoles</p>
                <p>05/06/2024</p>
            </div>
            <button type="button" aria-label="Notificaciones"><svg class="size-[12px]" viewBox="0 0 12 12" fill="none" stroke="#e5e5e5"><path d="M.5 1h11v8H8L6 11 4 9H.5z"/></svg></button>
        </div>
    </div>
</body>
</html>
